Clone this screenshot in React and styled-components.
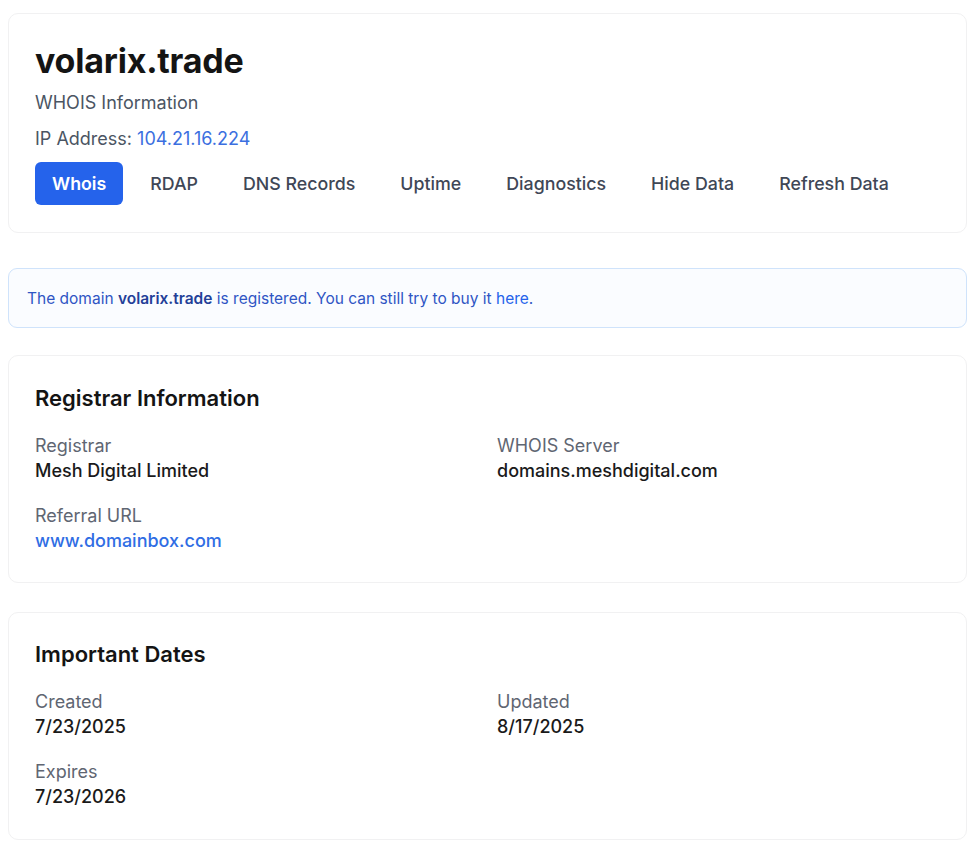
import React from "react";
import styled, { createGlobalStyle } from "styled-components";

const Global = createGlobalStyle`
  html, body { margin: 0; padding: 0; background: #ffffff; }
  body { font-family: Inter, "Noto Sans", "Liberation Sans", sans-serif; color: #111827; }
  * { box-sizing: border-box; }
`;

const Page = styled.div`
  padding: 13px 8px 16px;
  display: flex;
  flex-direction: column;
`;

const Card = styled.section`
  background: #fff;
  border: 1px solid #f1f1f2;
  border-radius: 10px;
  padding: ${(p) => p.$pad || "27px 26px 27px"};
  margin-bottom: ${(p) => p.$mb || "28px"};
`;

const Title = styled.h1`
  margin: 0;
  font-size: 34px;
  line-height: 40px;
  font-weight: 700;
  color: #141414;
  letter-spacing: -0.2px;
`;

const Sub = styled.p`
  margin: ${(p) => p.$m || "9px 0 0"};
  font-size: 18px;
  line-height: 26px;
  color: #4b5563;
`;

const Link = styled.a`
  color: ${(p) => p.$c || "#3b6fe0"};
  text-decoration: none;
`;

const Tabs = styled.nav`
  display: flex;
  gap: 9px;
  margin-top: 10px;
`;

const Tab = styled.button`
  font-family: inherit;
  font-size: 17.8px;
  height: 43px;
  padding: 0 ${(p) => (p.$active ? "17px" : "18px")};
  border: none;
  border-radius: 6px;
  cursor: pointer;
  background: ${(p) => (p.$active ? "#2563eb" : "transparent")};
  color: ${(p) => (p.$active ? "#ffffff" : "#3f4756")};
  font-weight: ${(p) => (p.$active ? 600 : 500)};
`;

const Alert = styled.div`
  border: 1px solid #cfe3fb;
  background: #fafcff;
  border-radius: 9px;
  padding: 0 18px;
  height: 60px;
  display: flex;
  align-items: center;
  font-size: 15.5px;
  color: #2f55c4;
  margin: 35px 0 27px;
`;

const Strong = styled.strong`
  font-weight: 600;
  color: #233f98;
`;

const Heading = styled.h2`
  margin: 0 0 21px;
  font-size: 22px;
  line-height: 28px;
  font-weight: 600;
  color: #141414;
`;

const Grid = styled.div`
  display: grid;
  grid-template-columns: 1fr 1fr;
  column-gap: 19px;
  row-gap: 20px;
`;

const Field = styled.div`
  display: flex;
  flex-direction: column;
`;

const Label = styled.span`
  font-size: 18px;
  line-height: 25px;
  color: #5f6672;
`;

const Value = styled.span`
  font-size: 18px;
  line-height: 25px;
  font-weight: 500;
  color: #1a1a1a;
`;

const tabs = ["Whois", "RDAP", "DNS Records", "Uptime", "Diagnostics", "Hide Data", "Refresh Data"];

export default function App() {
  return (
    <>
      <Global />
      <Page>
        <Card $pad="27px 26px 27px" $mb="0">
          <Title>volarix.trade</Title>
          <Sub>WHOIS Information</Sub>
          <Sub $m="10px 0 0">
            IP Address: <Link href="#">104.21.16.224</Link>
          </Sub>
          <Tabs>
            {tabs.map((t, i) => (
              <Tab key={t} $active={i === 0}>{t}</Tab>
            ))}
          </Tabs>
        </Card>

        <Alert>
          <span>
            The domain <Strong>volarix.trade</Strong> is registered. You can still try to buy it{" "}
            <Link href="#" $c="#2563eb">here</Link>.
          </span>
        </Alert>

        <Card $pad="28px 26px 29px" $mb="29px">
          <Heading>Registrar Information</Heading>
          <Grid>
            <Field>
              <Label>Registrar</Label>
              <Value>Mesh Digital Limited</Value>
            </Field>
            <Field>
              <Label>WHOIS Server</Label>
              <Value>domains.meshdigital.com</Value>
            </Field>
            <Field>
              <Label>Referral URL</Label>
              <Value><Link href="#" $c="#2f6de4">www.domainbox.com</Link></Value>
            </Field>
          </Grid>
        </Card>

        <Card $pad="27px 26px 30px" $mb="0">
          <Heading>Important Dates</Heading>
          <Grid>
            <Field>
              <Label>Created</Label>
              <Value>7/23/2025</Value>
            </Field>
            <Field>
              <Label>Updated</Label>
              <Value>8/17/2025</Value>
            </Field>
            <Field>
              <Label>Expires</Label>
              <Value>7/23/2026</Value>
            </Field>
          </Grid>
        </Card>
      </Page>
    </>
  );
}
